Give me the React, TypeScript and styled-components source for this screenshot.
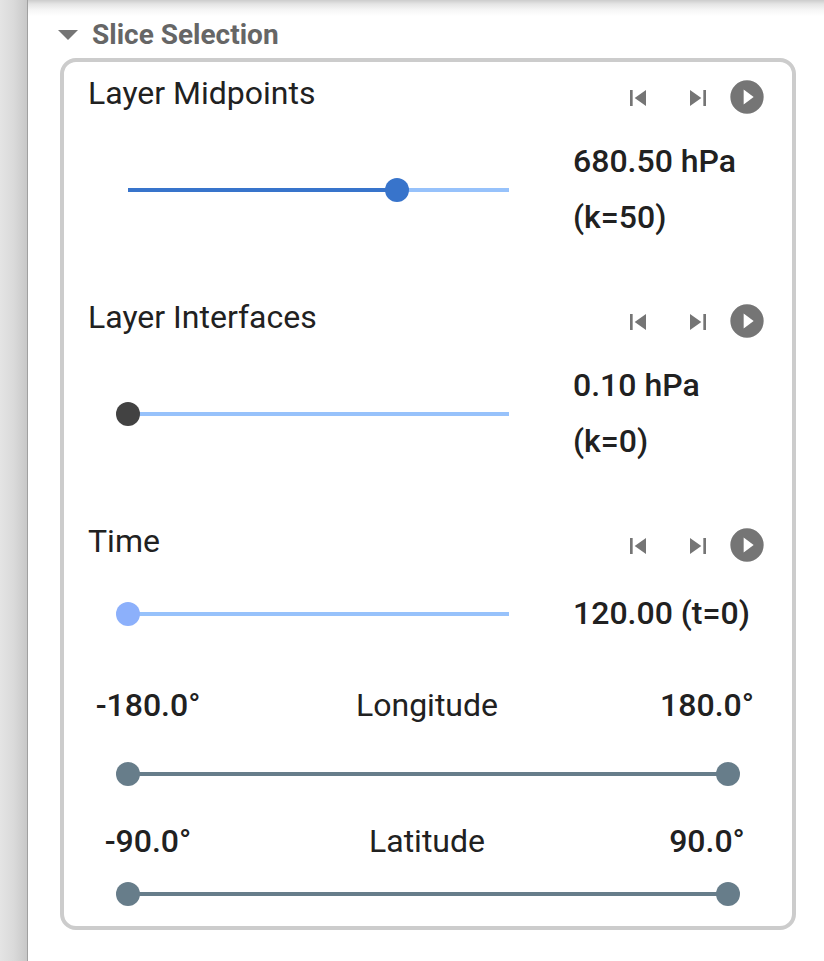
import React, { useState } from "react";
import styled, { createGlobalStyle } from "styled-components";

const GlobalStyle = createGlobalStyle`
  *, *::before, *::after { box-sizing: border-box; }
  body {
    margin: 0;
    background: #e4e4e4;
    color: #212121;
    font-family: Roboto, "Liberation Sans", sans-serif;
    font-size: 32px;
    line-height: 56px;
  }
`;

const Page = styled.div`
  display: flex;
  min-height: 100vh;
`;

const Gutter = styled.div`
  flex: none;
  width: 28px;
  border-right: 1px solid #a0a0a0;
  background: linear-gradient(to right, #e4e4e4, #dadada 50%, #c8c8c8);
`;

const Panel = styled.main`
  flex: 1;
  min-width: 0;
  padding: 14px 28px 31px 32px;
  background: linear-gradient(#cccccc, #e4e4e4 4px, #f6f6f6 10px, #fff 16px) no-repeat #fff;
`;

const PanelToggle = styled.button`
  display: flex;
  align-items: center;
  gap: 14px;
  width: 100%;
  height: 44px;
  padding: 0 0 2px;
  border: 0;
  background: none;
  color: #666;
  font: 700 28px/40px Roboto, "Liberation Sans", sans-serif;
  text-align: left;
  cursor: pointer;
`;

const Caret = styled.svg<{ $open: boolean }>`
  flex: none;
  margin-left: -2px;
  transform: ${({ $open }) => ($open ? "none" : "rotate(-90deg)")};
  fill: #757575;
`;

const Frame = styled.section`
  padding-bottom: 20px;
  border: 4px solid #ccc;
  border-radius: 16px;
`;

const Slice = styled.div<{ $roomy?: boolean }>`
  padding-bottom: ${({ $roomy }) => ($roomy ? 38 : 0)}px;
`;

const SliceHeader = styled.div`
  display: flex;
  align-items: center;
  height: 70px;
  padding: 0 26px 0 24px;
`;

const SliceTitle = styled.label`
  flex: 1;
  margin-bottom: 8px;
`;

const StepButton = styled.button`
  display: flex;
  flex: none;
  align-items: center;
  justify-content: center;
  width: 60px;
  height: 40px;
  padding: 2px 0 0;
  border: 0;
  background: none;
  color: #757575;
  cursor: pointer;
`;

const PlayButton = styled(StepButton)`
  width: 38px;
  padding: 0;
`;

const Icon = styled.svg<{ $size: number }>`
  flex: none;
  width: ${({ $size }) => $size}px;
  height: ${({ $size }) => $size}px;
  fill: currentColor;
`;

const SliceBody = styled.div`
  display: grid;
  grid-template-columns: minmax(0, 1fr) 219px;
  column-gap: 52px;
  align-items: center;
  min-height: 68px;
  padding: 1px 0 1px 52px;
`;

const Reading = styled.output`
  font-weight: 500;
`;

const SliceReading = styled(Reading)`
  padding-bottom: 2px;
`;

const Line = styled.span`
  display: block;
`;

const Slider = styled.input<{ $thumb: string }>`
  appearance: none;
  width: 100%;
  height: 24px;
  margin: 0;
  background: linear-gradient(to right, #3874cb var(--fill), #97c2fb var(--fill)) center / calc(100% - 24px) 4px no-repeat;
  cursor: pointer;

  &::-webkit-slider-thumb {
    appearance: none;
    width: 24px;
    height: 24px;
    border: 0;
    border-radius: 50%;
    background: ${({ $thumb }) => $thumb};
  }
`;

const RangeGroup = styled.div<{ $gap: number }>`
  display: grid;
  row-gap: ${({ $gap }) => $gap}px;
`;

const RangeLabels = styled.div`
  display: grid;
  grid-template-columns: 168px minmax(0, 1fr) 170px;
  text-align: center;
`;

const RangeTrack = styled.div`
  position: relative;
  height: 24px;
  margin: 0 52px;
  background: linear-gradient(#677d8a, #677d8a) center / calc(100% - 24px) 4px no-repeat;
`;

const RangeEnd = styled.input`
  position: absolute;
  inset: 0;
  appearance: none;
  width: 100%;
  height: 24px;
  margin: 0;
  background: none;
  pointer-events: none;

  &::-webkit-slider-thumb {
    appearance: none;
    width: 24px;
    height: 24px;
    border: 0;
    border-radius: 50%;
    background: #677d8a;
    cursor: pointer;
    pointer-events: auto;
  }
`;

const Ranges = styled.div`
  display: grid;
  row-gap: 27px;
  padding-top: 29px;
`;

type SliceProps = {
  id: string;
  title: string;
  reading: string[];
  start: number;
  thumb: string;
  roomy?: boolean;
};

function SliceControl({ id, title, reading, start, thumb, roomy }: SliceProps) {
  const [value, setValue] = useState(start);
  return (
    <Slice $roomy={roomy}>
      <SliceHeader>
        <SliceTitle htmlFor={id}>{title}</SliceTitle>
        <StepButton aria-label={`Previous ${title}`}>
          <Icon $size={32} viewBox="0 0 24 24"><path d="M6 18V6h2v12H6m3.5-6L18 6v12l-8.5-6z" /></Icon>
        </StepButton>
        <StepButton aria-label={`Next ${title}`}>
          <Icon $size={32} viewBox="0 0 24 24"><path d="M16 18h2V6h-2M6 18l8.5-6L6 6v12z" /></Icon>
        </StepButton>
        <PlayButton aria-label={`Play ${title}`}>
          <Icon $size={40} viewBox="0 0 24 24"><path d="M10 16.5v-9l6 4.5M12 2A10 10 0 0 0 2 12a10 10 0 0 0 10 10 10 10 0 0 0 10-10A10 10 0 0 0 12 2z" /></Icon>
        </PlayButton>
      </SliceHeader>
      <SliceBody>
        <Slider
          id={id}
          type="range"
          min={0}
          max={100}
          step={0.1}
          value={value}
          $thumb={thumb}
          style={{ "--fill": `${value}%` } as React.CSSProperties}
          onChange={(e) => setValue(Number(e.target.value))}
        />
        <SliceReading htmlFor={id}>
          {reading.map((text) => <Line key={text}>{text}</Line>)}
        </SliceReading>
      </SliceBody>
    </Slice>
  );
}

function RangeControl({ title, limit, gap }: { title: string; limit: number; gap: number }) {
  const [low, setLow] = useState(-limit);
  const [high, setHigh] = useState(limit);
  return (
    <RangeGroup $gap={gap} role="group" aria-label={title}>
      <RangeLabels>
        <Reading>{low.toFixed(1)}°</Reading>
        <span>{title}</span>
        <Reading>{high.toFixed(1)}°</Reading>
      </RangeLabels>
      <RangeTrack>
        <RangeEnd type="range" aria-label={`${title} minimum`} min={-limit} max={limit} value={low}
          onChange={(e) => setLow(Math.min(Number(e.target.value), high))} />
        <RangeEnd type="range" aria-label={`${title} maximum`} min={-limit} max={limit} value={high}
          onChange={(e) => setHigh(Math.max(Number(e.target.value), low))} />
      </RangeTrack>
    </RangeGroup>
  );
}

export default function App() {
  const [open, setOpen] = useState(true);
  return (
    <>
      <GlobalStyle />
      <Page>
        <Gutter />
        <Panel>
          <PanelToggle aria-expanded={open} onClick={() => setOpen(!open)}>
            <Caret $open={open} width="20" height="10" viewBox="0 0 20 10"><path d="M0 0h20L10 10z" /></Caret>
            Slice Selection
          </PanelToggle>
          {open && (
            <Frame>
              <SliceControl id="midpoints" title="Layer Midpoints" reading={["680.50 hPa", "(k=50)"]} start={70.6} thumb="#3874cb" roomy />
              <SliceControl id="interfaces" title="Layer Interfaces" reading={["0.10 hPa", "(k=0)"]} start={0} thumb="#424242" roomy />
              <SliceControl id="time" title="Time" reading={["120.00 (t=0)"]} start={0} thumb="#8cb0fb" />
              <Ranges>
                <RangeControl title="Longitude" limit={180} gap={29} />
                <RangeControl title="Latitude" limit={90} gap={13} />
              </Ranges>
            </Frame>
          )}
        </Panel>
      </Page>
    </>
  );
}
